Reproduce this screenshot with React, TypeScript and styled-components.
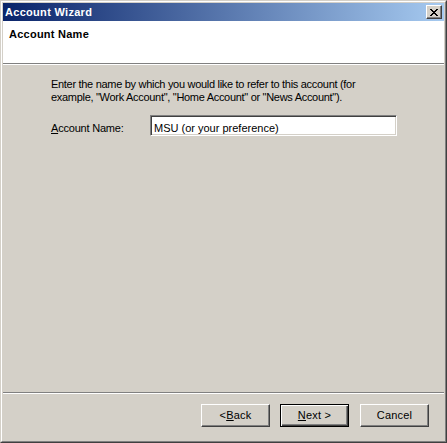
import React from 'react';
import styled, { createGlobalStyle } from 'styled-components';

const GlobalStyle = createGlobalStyle`
    html, body {
        margin: 0;
        padding: 0;
        background: #d4d0c8;
    }
    body {
        font-family: 'Liberation Sans', Arial, sans-serif;
        font-size: 11px;
        color: #000;
    }
`;

const Window = styled.div`
    box-sizing: border-box;
    width: 447px;
    height: 443px;
    background: #d4d0c8;
    border-style: solid;
    border-width: 1px;
    border-color: #d4d0c8 #404040 #404040 #d4d0c8;
`;

const Frame = styled.div`
    box-sizing: border-box;
    height: 100%;
    padding: 1px;
    display: flex;
    flex-direction: column;
    border-style: solid;
    border-width: 1px;
    border-color: #ffffff #808080 #808080 #ffffff;
`;

const TitleBar = styled.div`
    height: 18px;
    display: flex;
    align-items: center;
    justify-content: space-between;
    padding: 0 2px 0 2px;
    background: linear-gradient(to right, #0a246a, #a6caf0);
`;

const Title = styled.span`
    color: #fff;
    font-weight: bold;
    font-size: 11px;
    line-height: 18px;
    letter-spacing: 0.3px;
`;

const CloseButton = styled.div`
    box-sizing: border-box;
    width: 16px;
    height: 14px;
    display: flex;
    align-items: center;
    justify-content: center;
    background: #d4d0c8;
    border-style: solid;
    border-width: 1px;
    border-color: #ffffff #404040 #404040 #ffffff;
    box-shadow: inset -1px -1px #808080;
`;

const Header = styled.div`
    box-sizing: content-box;
    height: 35px;
    background: #fff;
    border-bottom: 1px solid #808080;
    padding: 7px 0 0 6px;
`;

const HeaderTitle = styled.div`
    font-weight: bold;
    line-height: 13px;
    letter-spacing: 0.25px;
`;

const Body = styled.div`
    flex: 1;
    border-top: 1px solid #fff;
    padding: 13px 0 0 48px;
`;

const Intro = styled.p`
    margin: 0;
    line-height: 13px;
    letter-spacing: -0.3px;
`;

const FieldRow = styled.div`
    display: flex;
    align-items: baseline;
    margin-top: 11px;
`;

const Label = styled.label`
    width: 99px;
    line-height: 13px;
    letter-spacing: -0.2px;
`;

const TextField = styled.input`
    box-sizing: border-box;
    width: 247px;
    height: 21px;
    margin: 0;
    padding: 4px 3px 0 3px;
    font-family: inherit;
    font-size: 11px;
    line-height: 13px;
    color: #000;
    background: #fff;
    outline: none;
    border-style: solid;
    border-width: 1px;
    border-color: #808080 #ffffff #ffffff #808080;
    box-shadow: inset 1px 1px #404040, inset -1px -1px #d4d0c8;
`;

const Separator = styled.div`
    border-top: 1px solid #808080;
    border-bottom: 1px solid #ffffff;
`;

const ButtonBar = styled.div`
    display: flex;
    justify-content: flex-end;
    gap: 10px;
    padding: 10px 15px 13px 0;
`;

const Button = styled.div<{ $default?: boolean; $spaced?: boolean }>`
    box-sizing: border-box;
    width: 69px;
    height: 23px;
    display: flex;
    align-items: center;
    justify-content: center;
    margin-left: ${(p) => (p.$spaced ? '1px' : '0')};
    background: #d4d0c8;
    line-height: 13px;
    letter-spacing: 0.2px;
    border-style: solid;
    border-width: 1px;
    border-color: ${(p) => (p.$default ? '#000' : '#ffffff #404040 #404040 #ffffff')};
    box-shadow: ${(p) =>
        p.$default
            ? 'inset 1px 1px #ffffff, inset -1px -1px #404040, inset -2px -2px #808080'
            : 'inset -1px -1px #808080'};
`;

const Key = styled.span`
    text-decoration: underline;
`;

export default function App() {
    return (
        <>
            <GlobalStyle />
            <Window>
                <Frame>
                    <TitleBar>
                        <Title>Account Wizard</Title>
                        <CloseButton>
                            <svg width="8" height="7" viewBox="0 0 8 7">
                                <path d="M0 0h2v1h1v1h2V1h1V0h2v1H7v1H6v1H5v1h1v1h1v1h1v1H6V6H5V5H3v1H2v1H0V6h1V5h1V4h1V3H2V2H1V1H0z" fill="#000" />
                            </svg>
                        </CloseButton>
                    </TitleBar>
                    <Header>
                        <HeaderTitle>Account Name</HeaderTitle>
                    </Header>
                    <Body>
                        <Intro>
                            Enter the name by which you would like to refer to this account (for
                            <br />
                            example, "Work Account", "Home Account" or "News Account").
                        </Intro>
                        <FieldRow>
                            <Label htmlFor="accountName">
                                <Key>A</Key>ccount Name:
                            </Label>
                            <TextField id="accountName" readOnly value="MSU (or your preference)" />
                        </FieldRow>
                    </Body>
                    <Separator />
                    <ButtonBar>
                        <Button>
                            &lt; <Key>B</Key>ack
                        </Button>
                        <Button $default>
                            <Key>N</Key>ext &gt;
                        </Button>
                        <Button $spaced>Cancel</Button>
                    </ButtonBar>
                </Frame>
            </Window>
        </>
    );
}
